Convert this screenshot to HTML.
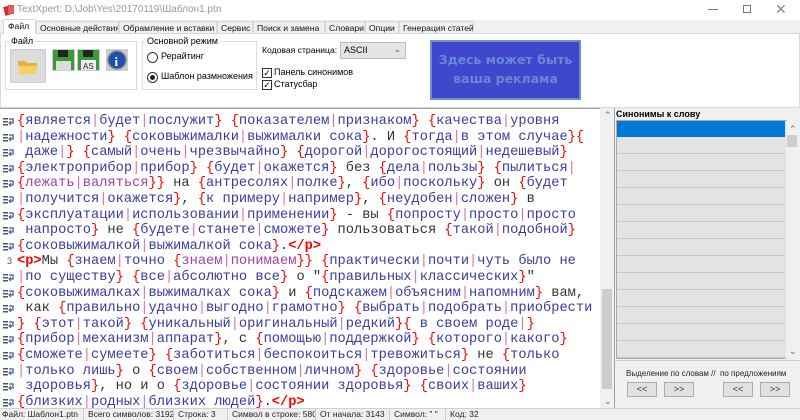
<!DOCTYPE html>
<html><head><meta charset="utf-8"><style>
*{margin:0;padding:0;box-sizing:border-box}
body{width:800px;height:420px;overflow:hidden;background:#f0f0f0;font-family:"Liberation Sans",sans-serif;font-size:10px;color:#000;position:relative}
.a{position:absolute;white-space:nowrap}
.tab{position:absolute;top:21px;height:13px;border:1px solid #d9d9d9;border-bottom:none;background:#f0f0f0;font-size:8.6px;line-height:12px;padding-left:3px;color:#111;white-space:nowrap;overflow:hidden}
.grp{position:absolute;border:1px solid #dcdcdc}
.ed{position:absolute;left:0;top:108px;width:600px;height:301px;background:#fff;border-top:1px solid #a0a0a0;overflow:hidden}
.ln{position:absolute;left:17px;font-family:"Liberation Mono",monospace;font-size:13.7px;line-height:15.5px;color:#333;white-space:pre}
.ic{position:absolute;left:3px;width:11px;height:8px}
.b{color:#f00}
.w1{color:#3a3aa2}.w2{color:#a040a8}
.p{color:#e070a0}
.tg{color:#f00;font-weight:bold}
.row{position:absolute;left:617px;width:168px;height:16px;background:#e3e3e3;border-bottom:1px solid #c8c8c8}
.btn{position:absolute;top:382px;width:30px;height:15px;background:#e1e1e1;border:1px solid #adadad;font-size:9px;text-align:center;line-height:13px;color:#333}
.st{position:absolute;top:409px;font-size:8.5px;color:#222;line-height:11px;border-right:1px solid #ccc;padding-right:4px;white-space:nowrap;overflow:hidden;height:11px}
</style></head><body>
<div class="a" style="left:0;top:0;width:800px;height:20px;background:#fff"></div>
<svg class="a" style="left:3px;top:4px" width="12" height="12"><rect x="1" y="2" width="7" height="9" fill="#c33" transform="rotate(-15 5 6)"/><rect x="5" y="1" width="6" height="9" fill="#e55"/></svg>
<div class="a" style="left:17px;top:4px;color:#999;font-size:10px">TextXpert: D:\Job\Yes\20170119\Шаблон1.ptn</div>
<div class="a" style="left:708px;top:9px;width:10px;height:1px;background:#777"></div>
<div class="a" style="left:743px;top:5px;width:8px;height:8px;border:1px solid #777"></div>
<div class="a" style="left:775px;top:1px;color:#888;font-size:14px">✕</div>
<div class="tab" style="left:36px;width:83px">Основные действия</div>
<div class="tab" style="left:119px;width:98px">Обрамление и вставки</div>
<div class="tab" style="left:217px;width:36px">Сервис</div>
<div class="tab" style="left:253px;width:72px">Поиск и замена</div>
<div class="tab" style="left:325px;width:40px">Словари</div>
<div class="tab" style="left:365px;width:34px">Опции</div>
<div class="tab" style="left:399px;width:75px">Генерация статей</div>
<div class="a" style="left:0;top:33px;width:800px;height:75px;background:#fff;border:1px solid #d9d9d9"></div>
<div class="tab" style="left:3px;top:19px;width:33px;height:15px;background:#fff;padding-left:4px">Файл</div>
<div class="grp" style="left:5px;top:41px;width:132px;height:49px"></div>
<div class="a" style="left:10px;top:36px;background:#fff;padding:0 1px;font-size:9px">Файл</div>
<div class="a" style="left:10px;top:49px;width:36px;height:34px;background:#dcdcdc;border:1px solid #ccc"></div>
<svg class="a" style="left:17px;top:58px" width="22" height="17"><path d="M1 3h7l2 2h10v3H1z" fill="#e8b040"/><path d="M3 8h18l-3 8H1z" fill="#f8d060"/></svg>
<div class="a" style="left:52px;top:49px;width:23px;height:22px;background:#ccc"></div>
<svg class="a" style="left:53px;top:50px" width="21" height="20"><rect width="21" height="20" fill="#3a9a3a"/><rect x="5" y="0" width="10" height="7" fill="#222"/><rect x="3" y="11" width="15" height="9" fill="#ddd"/></svg>
<div class="a" style="left:77px;top:49px;width:23px;height:22px;background:#ccc"></div>
<svg class="a" style="left:78px;top:50px" width="21" height="20"><rect width="21" height="20" fill="#3a9a3a"/><rect x="5" y="0" width="10" height="7" fill="#222"/><rect x="3" y="10" width="15" height="10" fill="#eee"/><text x="5" y="19" font-size="8" font-family="Liberation Sans" fill="#222">AS</text></svg>
<div class="a" style="left:106px;top:49px;width:22px;height:22px;background:#ccc"></div>
<svg class="a" style="left:107px;top:50px" width="20" height="20"><circle cx="10" cy="10" r="9" fill="#1f4fb0" stroke="#888" stroke-width="1.5"/><text x="7.5" y="16" font-size="13" font-weight="bold" font-family="Liberation Serif" fill="#fff">i</text></svg>
<div class="grp" style="left:142px;top:41px;width:115px;height:49px"></div>
<div class="a" style="left:146px;top:36px;background:#fff;padding:0 1px;font-size:9px">Основной режим</div>
<div class="a" style="left:147px;top:52px;width:11px;height:11px;border:1px solid #333;border-radius:50%"></div>
<div class="a" style="left:161px;top:51px;font-size:9px">Рерайтинг</div>
<div class="a" style="left:147px;top:72px;width:11px;height:11px;border:1px solid #333;border-radius:50%"></div>
<div class="a" style="left:150px;top:75px;width:5px;height:5px;background:#222;border-radius:50%"></div>
<div class="a" style="left:161px;top:71px;font-size:9px">Шаблон размножения</div>
<div class="a" style="left:262px;top:45px;font-size:8.6px">Кодовая страница:</div>
<div class="a" style="left:340px;top:42px;width:66px;height:17px;background:#e5e5e5;border:1px solid #bbb;font-size:9px;padding:2px 0 0 3px">ASCII<span style="position:absolute;right:4px;top:1px;color:#555">⌄</span></div>
<div class="a" style="left:262px;top:68px;width:10px;height:10px;border:1px solid #333;font-size:9px;line-height:8px;text-align:center">✓</div>
<div class="a" style="left:274px;top:67px;font-size:9px">Панель синонимов</div>
<div class="a" style="left:262px;top:80px;width:10px;height:10px;border:1px solid #333;font-size:9px;line-height:8px;text-align:center">✓</div>
<div class="a" style="left:274px;top:79px;font-size:9px">Статусбар</div>
<div class="a" style="left:430px;top:40px;width:151px;height:60px;background:#3f48cc;border:2px solid #7090c8;color:#6a86d6;font-weight:bold;font-size:12.5px;text-align:center;line-height:19px;padding-top:8px;font-family:'DejaVu Sans',sans-serif">Здесь может быть<br>ваша реклама</div>
<div class="ed" id="ed"></div>
<div class="a" style="left:600px;top:108px;width:14px;height:301px;background:#f0f0f0"></div>
<div class="a" style="left:604px;top:110px;color:#666;font-size:9px">⌃</div>
<div class="a" style="left:602px;top:289px;width:10px;height:100px;background:#cdcdcd"></div>
<div class="a" style="left:604px;top:396px;color:#666;font-size:9px">⌄</div>
<div class="a" style="left:614px;top:108px;width:186px;height:301px;background:#f0f0f0;border-left:1px solid #a0a0a0"></div>
<div class="a" style="left:616px;top:109px;font-weight:bold;font-size:9px">Синонимы к слову</div>
<div class="a" style="left:616px;top:120px;width:171px;height:239px;background:#e3e3e3;border:1px solid #aaa"></div>
<div id="rows"></div>
<div class="a" style="left:617px;top:121px;width:168px;height:16px;background:#0078d7"></div>
<div class="a" style="left:786px;top:121px;width:12px;height:238px;background:#f0f0f0"></div>
<div class="a" style="left:789px;top:124px;color:#666;font-size:9px">⌃</div>
<div class="a" style="left:787px;top:135px;width:10px;height:12px;background:#cdcdcd"></div>
<div class="a" style="left:789px;top:346px;color:#666;font-size:9px">⌄</div>
<div class="a" style="left:614px;top:360px;width:186px;height:1px;background:#ccc"></div>
<div class="a" style="left:626px;top:369px;font-size:8px;color:#222">Выделение по словам //&nbsp; по предложениям</div>
<div class="btn" style="left:627px">&lt;&lt;</div>
<div class="btn" style="left:664px">&gt;&gt;</div>
<div class="btn" style="left:723px">&lt;&lt;</div>
<div class="btn" style="left:760px">&gt;&gt;</div>
<div class="a" style="left:0;top:408px;width:800px;height:1px;background:#d0d0d0"></div>
<div class="st" style="left:2px;width:82px">Файл: Шаблон1.ptn</div>
<div class="st" style="left:88px;width:86px">Всего символов: 3192</div>
<div class="st" style="left:178px;width:50px">Строка: 3</div>
<div class="st" style="left:232px;width:84px">Символ в строке: 580</div>
<div class="st" style="left:320px;width:70px">От начала: 3143</div>
<div class="st" style="left:394px;width:52px">Символ: " "</div>
<div class="st" style="left:450px;border:none">Код: 32</div>
<script>
var L=[
"{является|будет|послужит} {показателем|признаком} {качества|уровня",
"|надежности} {соковыжималки|выжималки сока}. И {тогда|в этом случае}{",
" даже|} {самый|очень|чрезвычайно} {дорогой|дорогостоящий|недешевый}",
"{электроприбор|прибор} {будет|окажется} без {дела|пользы} {пылиться|",
"{лежать|валяться}} на {антресолях|полке}, {ибо|поскольку} он {будет",
"|получится|окажется}, {к примеру|например}, {неудобен|сложен} в",
"{эксплуатации|использовании|применении} - вы {попросту|просто|просто",
" напросто} не {будете|станете|сможете} пользоваться {такой|подобной}",
"{соковыжималкой|выжималкой сока}.</p>",
"<p>Мы {знаем|точно {знаем|понимаем}} {практически|почти|чуть было не",
"|по существу} {все|абсолютно все} о \"{правильных|классических}\"",
"{соковыжималках|выжималках сока} и {подскажем|объясним|напомним} вам,",
" как {правильно|удачно|выгодно|грамотно} {выбрать|подобрать|приобрести",
"} {этот|такой} {уникальный|оригинальный|редкий}{ в своем роде|}",
"{прибор|механизм|аппарат}, с {помощью|поддержкой} {которого|какого}",
"{сможете|сумеете} {заботиться|беспокоиться|тревожиться} не {только",
"|только лишь} о {своем|собственном|личном} {здоровье|состоянии",
" здоровья}, но и о {здоровье|состоянии здоровья} {своих|ваших}",
"{близких|родных|близких людей}.</p>"];
var depth=[0,1,1,0,1,1,0,1,0,0,1,0,0,1,0,0,1,1,0];
var ed=document.getElementById('ed'),h='';
function esc(c){return c=='<'?'&lt;':c=='>'?'&gt;':c=='&'?'&amp;':c}
for(var i=0;i<L.length;i++){
 var s=L[i],d=depth[i],o='',j=0,y=5+i*15.6;
 while(j<s.length){
  var c=s[j];
  if(s.substr(j,3)=='<p>'){o+='<span class="tg">&lt;p&gt;</span>';j+=3;continue}
  if(s.substr(j,4)=='</p>'){o+='<span class="tg">&lt;/p&gt;</span>';j+=4;continue}
  if(c=='{'){d++;o+='<span class="b">{</span>'}
  else if(c=='}'){d--;o+='<span class="b">}</span>'}
  else if(c=='|'){o+='<span class="p">|</span>'}
  else o+='<span class="'+(d>=2?'w2':d==1?'w1':'')+'">'+esc(c)+'</span>';
  j++;
 }
 h+='<div class="ln" style="top:'+y+'px">'+o+'</div>';
 if(i==9)h+='<div class="a" style="left:7px;top:'+(y+2)+'px;font-size:9px;color:#555">3</div>';
 else h+='<svg class="ic" style="top:'+(y+4)+'px" viewBox="0 0 11 8"><rect x="0" y="0" width="5" height="1.5" fill="#555"/><rect x="0" y="3" width="5" height="1.5" fill="#555"/><rect x="0" y="6" width="5" height="1.5" fill="#555"/><path d="M6 1h4v4H7" fill="none" stroke="#3a5aa0" stroke-width="1.3"/><path d="M8 3l-2 2 2 2" fill="none" stroke="#3a5aa0" stroke-width="1"/></svg>';
}
ed.innerHTML=h;
var r='';for(var k=0;k<14;k++)r+='<div class="row" style="top:'+(121+k*17)+'px"></div>';
document.getElementById('rows').innerHTML=r;
</script>
</body></html>
